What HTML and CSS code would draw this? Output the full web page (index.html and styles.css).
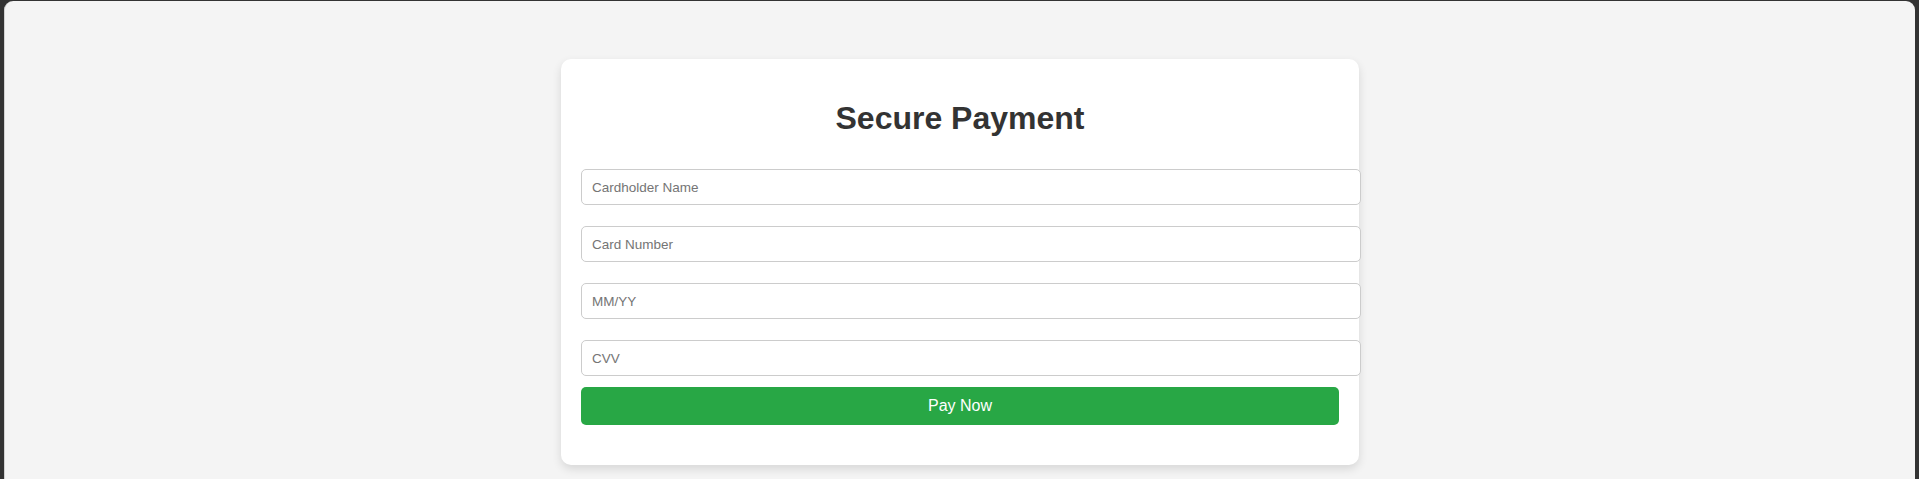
FILE: index.html
```html
<!DOCTYPE html>
<html lang="en">
<head>
<meta charset="utf-8">
<title>Secure Payment</title>
<link rel="stylesheet" href="styles.css">
</head>
<body>
<div class="window">
  <div class="card">
    <h1 class="title">Secure Payment</h1>
    <form class="pay-form">
      <input class="field" type="text" placeholder="Cardholder Name">
      <input class="field" type="text" placeholder="Card Number">
      <input class="field" type="text" placeholder="MM/YY">
      <input class="field field-last" type="text" placeholder="CVV">
      <button class="pay-btn" type="button">Pay Now</button>
    </form>
  </div>
</div>
</body>
</html>
```

FILE: styles.css
```css
html {
  background: #333333;
  height: 100%;
}
body {
  margin: 0;
  height: 100%;
  font-family: "Liberation Sans", Arial, sans-serif;
}
.window {
  box-sizing: border-box;
  margin: 1px 4px 0 4px;
  height: calc(100% - 1px);
  background: #f4f4f4;
  border-left: 1px solid #d2d2d2;
  border-radius: 9px 9px 0 0;
  padding-top: 58px;
}
.card {
  width: 758px;
  margin: 0 auto;
  padding: 20px 20px 20px;
  background: #ffffff;
  border-radius: 10px;
  box-shadow: 0 4px 10px rgba(0, 0, 0, 0.12);
}
.title {
  margin: 21px 0 32px;
  font-size: 32px;
  font-weight: bold;
  color: #333333;
  text-align: center;
  line-height: 37px;
}
.pay-form {
  display: flex;
  flex-direction: column;
  margin: 0;
}
.field {
  width: 100%;
  height: 14px;
  padding: 10px;
  margin: 0 0 21px;
  border: 1px solid #cccccc;
  border-radius: 5px;
  font-family: "Liberation Sans", Arial, sans-serif;
  font-size: 13.5px;
  color: #333;
  background: #fff;
  box-sizing: content-box;
}
.field::placeholder {
  color: #757575;
}
.field-last {
  margin-bottom: 11px;
}
.pay-btn {
  width: 100%;
  padding: 10px;
  border: none;
  border-radius: 5px;
  background: #28a745;
  color: #ffffff;
  font-family: "Liberation Sans", Arial, sans-serif;
  font-size: 16px;
  line-height: 18px;
  margin-bottom: 20px;
}
```
